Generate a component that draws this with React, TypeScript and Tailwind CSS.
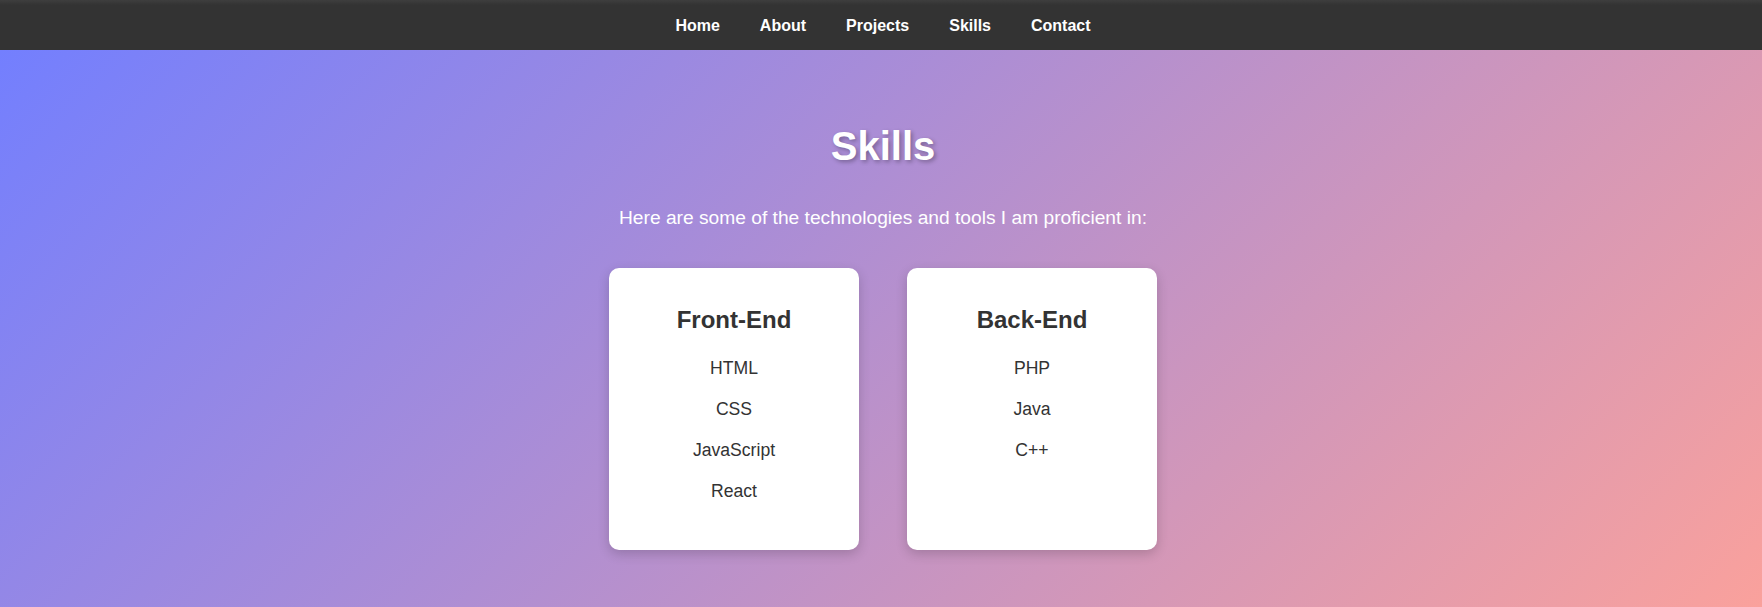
import React from "react";

const font = { fontFamily: '"Liberation Sans", Arial, sans-serif' };

function Card({ title, items }: { title: string; items: string[] }) {
  return (
    <div className="w-[250px] h-[282px] bg-white rounded-[10px] shadow-[0_4px_12px_rgba(0,0,0,0.18)] pt-[38px] text-center text-[#333]">
      <h3 className="text-[24px] font-bold leading-[27px]">{title}</h3>
      <ul className="mt-[15px]">
        {items.map((it) => (
          <li key={it} className="text-[17.6px] leading-[21px] py-[10px]">
            {it}
          </li>
        ))}
      </ul>
    </div>
  );
}

export default function App() {
  return (
    <div style={font} className="w-full min-h-[607px] flex flex-col">
      <nav className="h-[50px] pt-[2px] pl-[4px] bg-[linear-gradient(to_bottom,#3e3e3e_0px,#333333_5px)] flex items-center justify-center gap-[40px] text-white font-bold text-[16px]">
        <a>Home</a>
        <a>About</a>
        <a>Projects</a>
        <a>Skills</a>
        <a>Contact</a>
      </nav>
      <section className="h-[557px] pl-[4px] bg-[linear-gradient(135deg,#737ffe_0%,#faa19c_100%)] flex flex-col items-center pt-[73px]">
        <h2 className="text-[40px] font-bold text-white leading-[46px] [text-shadow:2px_2px_4px_rgba(0,0,0,0.3)]">
          Skills
        </h2>
        <p className="mt-[38px] text-[19.2px] text-white leading-[22px]">
          Here are some of the technologies and tools I am proficient in:
        </p>
        <div className="mt-[39px] flex gap-[48px]">
          <Card title="Front-End" items={["HTML", "CSS", "JavaScript", "React"]} />
          <Card title="Back-End" items={["PHP", "Java", "C++"]} />
        </div>
      </section>
    </div>
  );
}
